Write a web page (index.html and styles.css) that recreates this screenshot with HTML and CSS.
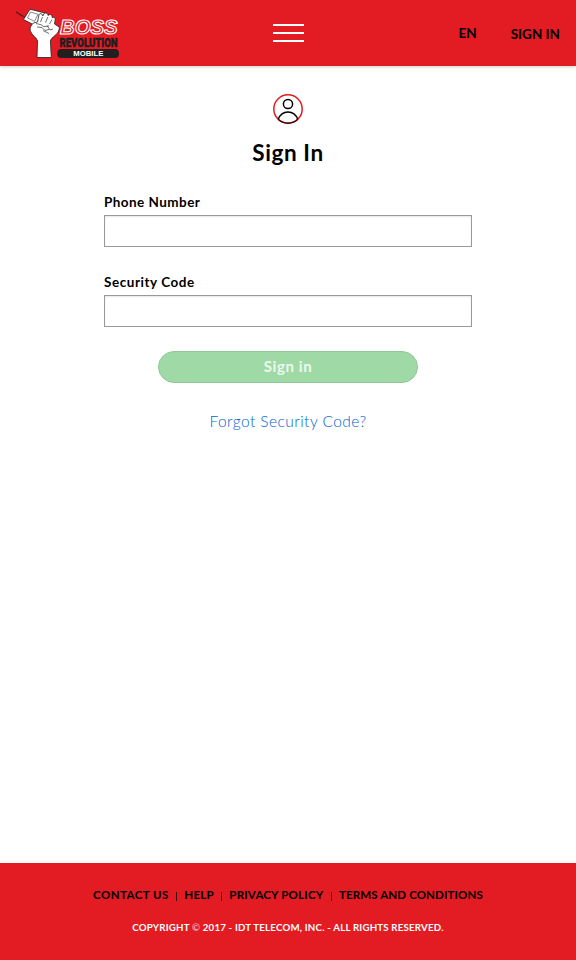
FILE: index.html
```html
<!DOCTYPE html>
<html lang="en">
<head>
<meta charset="utf-8">
<title>Sign In - Boss Revolution Mobile</title>
<link rel="stylesheet" href="styles.css">
</head>
<body>
<header class="header">
  <a class="logo" href="#">
    <svg width="108" height="54" viewBox="14 6 108 54" role="img" aria-label="Boss Revolution Mobile">
      <path d="M16 12l9 5.500" stroke="#222" stroke-width="1.200" stroke-dasharray="2.500 .6"/>
      <path d="M30 9.200L45 13l-7 14-14.500-7.500z" fill="#fff" stroke="#231f20" stroke-width=".8" stroke-linejoin="round"/>
      <path d="M30.500 12l7.500 2.300-3.500 7-7-3.300z" fill="#fff" stroke="#555" stroke-width=".7"/>
      <path d="M37 57.500L37.500 41c-.5-3.500-5.500-5-7.200-10.200-.7-3 .7-5.600 3.200-7.800l4-1 1.500-7.500c1-1.700 4-.5 3.700 1.500l1.500-2.500c1.500-1.400 4-.2 3.800 2l1-.8c2.200-.7 3.500.8 3 2.800 2-.8 3.500.5 3.200 2.400L54.500 24l4.700 3c.5 4-2.200 7-5.400 9.500-3 2.500-3.500 3.500-3.300 6.500l.8 14.500z" fill="#fff" stroke="#231f20" stroke-width=".8" stroke-linejoin="round"/>
      <path d="M42.500 17L40.500 22M47.800 17L45.500 22.500M52 19.500L49.500 24M36 23.500l5 1.200 3 2 5-.8M37 27l5 .5 3 3 4-1M47 25.500l3 4.500 3-1M43 30.500l6 3" fill="none" stroke="#333" stroke-width=".7"/>
      <rect x="57.300" y="49" width="61.700" height="9" rx="4" fill="#231f20"/>
      <text class="logo-boss" x="60" y="34.300" textLength="57.500" lengthAdjust="spacingAndGlyphs">BOSS</text>
      <text class="logo-revolution" x="59.500" y="46.600" textLength="58" lengthAdjust="spacingAndGlyphs">REVOLUTION</text>
      <text class="logo-mobile" x="73.300" y="56.200" textLength="30" lengthAdjust="spacingAndGlyphs">MOBILE</text>
    </svg>
  </a>
  <button class="menu" aria-label="Menu"><span></span><span></span><span></span></button>
  <nav class="account"><a class="lang" href="#">EN</a><a class="sign-link" href="#">SIGN IN</a></nav>
</header>
<main class="main">
  <svg class="avatar" width="30" height="30" viewBox="0 0 30 30" fill="none" stroke-width="1.500">
    <circle cx="15" cy="15" r="14.200" stroke="#e31b23"/>
    <circle cx="15" cy="10" r="4.600" stroke="#000"/>
    <path d="M5.200 25.300C7 20.500 10.500 17.900 15 17.900s8 2.600 9.800 7.400" stroke="#000"/>
    <path d="M5.200 25.300a14.200 14.200 0 0 0 19.600 0" stroke="#400609"/>
  </svg>
  <h1 class="title">Sign In</h1>
  <form class="form">
    <label class="label phone" for="phone">Phone Number</label>
    <input class="input" id="phone" type="tel">
    <label class="label code" for="code">Security Code</label>
    <input class="input" id="code" type="password">
    <button class="submit" type="button">Sign in</button>
  </form>
  <a class="forgot" href="#">Forgot Security Code?</a>
</main>
<footer class="footer">
  <nav class="links"><a class="contact" href="#">CONTACT US</a><i></i><a class="help" href="#">HELP</a><i></i><a class="privacy" href="#">PRIVACY POLICY</a><i></i><a class="terms" href="#">TERMS AND CONDITIONS</a></nav>
  <p class="copyright">COPYRIGHT <span class="mark">©</span> 2017 - IDT TELECOM, INC. - ALL RIGHTS RESERVED.</p>
</footer>
</body>
</html>
```
FILE: styles.css
```css
* { box-sizing: border-box; }
body {
  margin: 0;
  min-height: 960px;
  display: flex;
  flex-direction: column;
  background: #fff;
  color: #000;
  font-family: Lato, "Liberation Sans", sans-serif;
}
a { color: inherit; text-decoration: none; }
.header {
  height: 66px;
  display: grid;
  grid-template-columns: 1fr 31px 1fr;
  background: #e31b23;
  box-shadow: 0 1px 3px rgba(0, 0, 0, .2);
}
.logo { padding: 6px 0 0 14px; }
.logo svg { display: block; }
.logo-boss {
  font: italic 700 20px "Liberation Sans", sans-serif;
  fill: #e31b23;
  stroke: #fff;
  stroke-width: 1.1px;
}
.logo-revolution { font: 900 12.4px Roboto, sans-serif; fill: #231f20; stroke: #231f20; stroke-width: .5px; }
.logo-mobile { font: bold 7.5px "Liberation Sans", sans-serif; fill: #fff; }
.menu {
  display: flex;
  flex-direction: column;
  gap: 6px;
  padding: 24px 0 0;
  border: 0;
  background: none;
}
.menu span { width: 31px; height: 2px; background: #fff; }
.account {
  display: flex;
  justify-content: flex-end;
  align-items: flex-start;
  gap: 34px;
  padding-right: 16px;
  font-size: 13.5px;
  line-height: 18px;
  font-weight: 700;
}
.lang { padding-top: 24px; }
.sign-link { padding-top: 25px; }
.main {
  flex: 1;
  display: flex;
  flex-direction: column;
  align-items: center;
  padding-top: 28px;
}
.avatar { display: block; }
.title { margin: 15px 0 0; font-size: 22.5px; line-height: 28px; font-weight: 700; letter-spacing: .6px; }
.form { width: 368px; display: flex; flex-direction: column; margin-top: 26px; }
.label { height: 22px; font-size: 13.5px; line-height: 18px; font-weight: 700; }
.phone { letter-spacing: .45px; }
.code { letter-spacing: .55px; }
.input {
  height: 32px;
  margin: 0 0 26px;
  padding: 0 8px;
  border: 1px solid #999;
  border-radius: 0;
  background: #fff;
  box-shadow: inset 0 1px 2px rgba(0, 0, 0, .1);
  font: inherit;
}
.submit {
  align-self: center;
  width: 260px;
  height: 32px;
  margin-top: -2px;
  padding: 0 0 3px;
  border: 1px solid #93c89b;
  border-radius: 16px;
  background: #9fdaa6;
  color: #ecf8ed;
  font: bold 15px Lato, sans-serif;
  letter-spacing: .6px;
}
.forgot { margin-top: 28px; color: #0062d0; font-size: 15.5px; line-height: 20px; font-weight: 300; letter-spacing: .45px; }
.footer { height: 97px; padding-top: 24px; background: #e31b23; }
.links {
  display: flex;
  justify-content: center;
  align-items: center;
  height: 16px;
  font-size: 11.5px;
  line-height: 16px;
  font-weight: 700;
}
.links a { white-space: nowrap; }
.contact { letter-spacing: .45px; }
.help { letter-spacing: .2px; }
.privacy { letter-spacing: .2px; }
.terms { letter-spacing: .13px; }
.links i { width: 1px; height: 9px; margin: 3px 7.300px 0; background: #400609; }
.copyright { margin: 16px 0 0; text-align: center; color: #fff; font-size: 9.7px; line-height: 16px; font-weight: 700; letter-spacing: .2px; }
.mark { opacity: .6; }
```
